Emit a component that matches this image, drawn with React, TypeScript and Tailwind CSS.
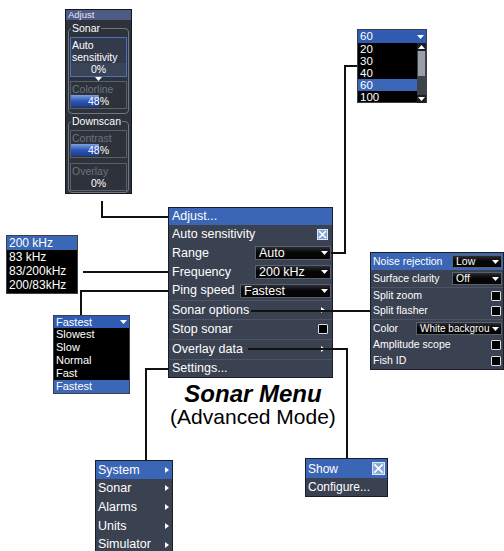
import React from "react";

const Tri = ({ className = "" }: { className?: string }) => (
  <svg width="7" height="4" viewBox="0 0 7 4" className={className}>
    <path d="M0 0h7L3.5 4z" fill="white" />
  </svg>
);

const TriUp = () => (
  <svg width="7" height="4" viewBox="0 0 7 4">
    <path d="M0 4h7L3.5 0z" fill="white" />
  </svg>
);

const RightArrow = () => (
  <svg width="4" height="6" viewBox="0 0 4 6">
    <path d="M0 0L4 3L0 6z" fill="white" />
  </svg>
);

const XBox = ({ size = 11 }: { size?: number }) => (
  <svg width={size} height={size} viewBox="0 0 11 11">
    <rect x="0.5" y="0.5" width="10" height="10" fill="#7fa3dc" stroke="#dfe8f7" />
    <path d="M2 2L9 9M9 2L2 9" stroke="white" strokeWidth="1.6" />
  </svg>
);

const EmptyBox = () => (
  <div className="w-[10px] h-[10px] bg-black border border-[#d8dce4] rounded-[1px]" />
);

const Drop = ({ label, className }: { label: string; className: string }) => (
  <div
    className={`flex items-center justify-between bg-gradient-to-b from-[#2a2d33] via-[#050505] to-[#050505] border border-[#5b616c] pl-[3px] pr-[2px] ${className}`}
  >
    <span className="whitespace-nowrap">{label}</span>
    <Tri />
  </div>
);

export default function App() {
  return (
    <div className="relative w-[504px] h-[551px] bg-white overflow-hidden font-['Liberation_Sans',Arial,sans-serif] text-white">
      {/* Adjust panel */}
      <div className="absolute left-[65px] top-[9px] w-[67px] h-[185px] bg-[#2d323b] border border-[#15171b] text-[10.5px] leading-none">
        <div className="h-[10px] bg-[#4d5a84] px-[2px] text-[9.5px] leading-[10px] text-[#e6e9f2]">Adjust</div>
        <div className="relative mx-[2px] mt-[8px] h-[86px] border border-[#707683] rounded-[4px] pt-[8px] px-[1px]">
          <div className="absolute left-[2px] -top-[7px] bg-[#2d323b] px-[1px] text-[10.5px] leading-[12px]">Sonar</div>
          <div className="h-[40px] border border-[#4a72c0] bg-[#323a4c] flex flex-col">
            <div className="px-[1px] pt-[1px] leading-[12px]">Auto</div>
            <div className="px-[1px] leading-[12px] whitespace-nowrap">sensitivity</div>
            <div className="mt-auto h-[13px] bg-[#3a4458] text-center leading-[13px]">0%</div>
          </div>
          <div className="flex justify-center h-[4px]"><Tri /></div>
          <div className="h-[28px] border border-[#5a606b] flex flex-col">
            <div className="px-[1px] pt-[1px] text-[#6c7380] leading-[12px]">Colorline</div>
            <div className="relative mt-auto mb-[1px] h-[12px]">
              <div className="absolute left-0 top-0 h-[12px] w-[28px] bg-gradient-to-b from-[#7ea0e0] via-[#2f55b6] to-[#1e3c8e]" />
              <div className="relative text-center leading-[12px]">48%</div>
            </div>
          </div>
        </div>
        <div className="relative mx-[2px] mt-[7px] h-[72px] border border-[#707683] rounded-[4px] pt-[8px] px-[1px]">
          <div className="absolute left-[2px] -top-[7px] bg-[#2d323b] px-[1px] text-[10.5px] leading-[12px]">Downscan</div>
          <div className="h-[28px] border border-[#5a606b] flex flex-col">
            <div className="px-[1px] pt-[1px] text-[#6c7380] leading-[12px]">Contrast</div>
            <div className="relative mt-auto mb-[1px] h-[12px]">
              <div className="absolute left-0 top-0 h-[12px] w-[28px] bg-gradient-to-b from-[#7ea0e0] via-[#2f55b6] to-[#1e3c8e]" />
              <div className="relative text-center leading-[12px]">48%</div>
            </div>
          </div>
          <div className="mt-[5px] h-[28px] border border-[#5a606b] flex flex-col">
            <div className="px-[1px] pt-[1px] text-[#6c7380] leading-[12px]">Overlay</div>
            <div className="mt-auto mb-[2px] text-center leading-[12px]">0%</div>
          </div>
        </div>
      </div>

      {/* Range list */}
      <div className="absolute left-[357px] top-[29px] w-[70px] h-[74px] bg-black border border-[#3c3f46] text-[11.5px] leading-none flex flex-col">
        <div className="h-[13px] bg-[#2f5cb0] flex items-center justify-between pl-[2px] pr-[2px] leading-[13px]">
          <span>60</span>
          <Tri />
        </div>
        <div className="flex flex-1">
          <div className="flex-1 flex flex-col">
            <div className="h-[12px] pl-[2px] leading-[12px]">20</div>
            <div className="h-[12px] pl-[2px] leading-[12px]">30</div>
            <div className="h-[12px] pl-[2px] leading-[12px]">40</div>
            <div className="h-[12px] pl-[2px] leading-[12px] bg-[#3a67b6]">60</div>
            <div className="h-[12px] pl-[2px] leading-[12px]">100</div>
          </div>
          <div className="w-[9px] flex flex-col bg-[#3d424b]">
            <div className="h-[8px] bg-[#1b1d22] flex items-center justify-center"><TriUp /></div>
            <div className="h-[25px] bg-[#9a9ea6] mx-[1px]" />
            <div className="flex-1" />
            <div className="h-[8px] bg-[#1b1d22] flex items-center justify-center"><Tri /></div>
          </div>
        </div>
      </div>

      {/* Frequency list */}
      <div className="absolute left-[6px] top-[235px] w-[72px] h-[59px] bg-black border border-[#3c3f46] text-[12px] flex flex-col">
        <div className="h-[14px] leading-[14px] pl-[2px] bg-[#3a67b6]">200 kHz</div>
        <div className="h-[14px] leading-[14px] pl-[2px]">83 kHz</div>
        <div className="h-[14px] leading-[14px] pl-[2px]">83/200kHz</div>
        <div className="h-[14px] leading-[14px] pl-[2px]">200/83kHz</div>
      </div>

      {/* Ping speed list */}
      <div className="absolute left-[53px] top-[315px] w-[77px] h-[79px] bg-black border border-[#3c3f46] text-[11px] flex flex-col">
        <div className="h-[12px] leading-[12px] pl-[2px] pr-[2px] bg-[#2f5cb0] flex items-center justify-between">
          <span>Fastest</span>
          <Tri />
        </div>
        <div className="h-[13px] leading-[13px] pl-[2px]">Slowest</div>
        <div className="h-[13px] leading-[13px] pl-[2px]">Slow</div>
        <div className="h-[13px] leading-[13px] pl-[2px]">Normal</div>
        <div className="h-[13px] leading-[13px] pl-[2px]">Fast</div>
        <div className="h-[13px] leading-[13px] pl-[2px] bg-[#3a67b6]">Fastest</div>
      </div>

      {/* Main menu */}
      <div className="absolute left-[168px] top-[207px] w-[165px] h-[171px] bg-[#3a4150] border border-[#1a1d23] text-[12.5px] flex flex-col">
        <div className="h-[17px] leading-[17px] px-[3px] bg-[#3a66b5]">Adjust...</div>
        <div className="h-[19px] flex items-center justify-between px-[3px]">
          <span>Auto sensitivity</span>
          <span className="mr-[1px]"><XBox /></span>
        </div>
        <div className="h-[19px] flex items-center justify-between pl-[3px] pr-[1px]">
          <span>Range</span>
          <Drop label="Auto" className="w-[76px] h-[14px] leading-[14px]" />
        </div>
        <div className="h-[19px] flex items-center justify-between pl-[3px] pr-[1px]">
          <span>Frequency</span>
          <Drop label="200 kHz" className="w-[76px] h-[14px] leading-[14px]" />
        </div>
        <div className="h-[19px] flex items-center justify-between pl-[3px] pr-[1px]">
          <span className="whitespace-nowrap">Ping speed</span>
          <Drop label="Fastest" className="w-[91px] h-[14px] leading-[14px]" />
        </div>
        <div className="h-[19px] flex items-center justify-between px-[3px] border-t border-[#4d5464]">
          <span>Sonar options</span>
          <span className="mr-[4px]"><RightArrow /></span>
        </div>
        <div className="h-[20px] flex items-center justify-between px-[3px] border-t border-[#4d5464]">
          <span>Stop sonar</span>
          <span className="mr-[1px]"><EmptyBox /></span>
        </div>
        <div className="h-[20px] flex items-center justify-between px-[3px] border-t border-[#4d5464]">
          <span>Overlay data</span>
          <span className="mr-[4px]"><RightArrow /></span>
        </div>
        <div className="h-[19px] flex items-center px-[3px] border-t border-[#4d5464]">
          <span>Settings...</span>
        </div>
      </div>

      {/* Caption */}
      <div className="absolute left-[140px] top-[381px] w-[226px] flex flex-col items-center text-black">
        <div className="text-[24px] leading-[26px] font-bold italic">Sonar Menu</div>
        <div className="text-[21px] leading-[22px] -mt-[1px]">(Advanced Mode)</div>
      </div>

      {/* Sonar options panel */}
      <div className="absolute left-[370px] top-[252px] w-[134px] h-[118px] bg-[#3a4150] border border-[#1a1d23] text-[10.5px] flex flex-col">
        <div className="h-[17px] flex items-center justify-between pl-[2px] pr-[1px] bg-[#3a66b5]">
          <span>Noise rejection</span>
          <Drop label="Low" className="w-[50px] h-[13px] leading-[13px]" />
        </div>
        <div className="h-[17px] flex items-center justify-between pl-[2px] pr-[1px]">
          <span>Surface clarity</span>
          <Drop label="Off" className="w-[50px] h-[13px] leading-[13px]" />
        </div>
        <div className="h-[16px] flex items-center justify-between pl-[2px] pr-[2px] border-t border-[#4d5464]">
          <span>Split zoom</span>
          <EmptyBox />
        </div>
        <div className="h-[16px] flex items-center justify-between pl-[2px] pr-[2px]">
          <span>Split flasher</span>
          <EmptyBox />
        </div>
        <div className="h-[18px] flex items-center justify-between pl-[2px] pr-[1px] border-t border-[#4d5464]">
          <span>Color</span>
          <Drop label="White backgrou" className="w-[86px] h-[13px] leading-[13px] text-[10px] pl-[2px] pr-[1px]" />
        </div>
        <div className="h-[16px] flex items-center justify-between pl-[2px] pr-[2px]">
          <span>Amplitude scope</span>
          <EmptyBox />
        </div>
        <div className="h-[16px] flex items-center justify-between pl-[2px] pr-[2px]">
          <span>Fish ID</span>
          <EmptyBox />
        </div>
      </div>

      {/* Show panel */}
      <div className="absolute left-[305px] top-[458px] w-[83px] h-[39px] bg-[#3a4150] border border-[#1a1d23] text-[12px] flex flex-col">
        <div className="h-[19px] flex items-center justify-between pl-[2px] pr-[2px] bg-[#3a66b5]">
          <span>Show</span>
          <XBox size={13} />
        </div>
        <div className="h-[18px] flex items-center pl-[2px]">Configure...</div>
      </div>

      {/* Settings panel */}
      <div className="absolute left-[95px] top-[460px] w-[78px] h-[95px] bg-[#3a4150] border border-[#1a1d23] text-[12.5px] flex flex-col">
        <div className="h-[18px] flex items-center justify-between pl-[2px] pr-[3px] bg-[#3a66b5]">
          <span>System</span>
          <RightArrow />
        </div>
        <div className="h-[19px] flex items-center justify-between pl-[2px] pr-[3px]">
          <span>Sonar</span>
          <RightArrow />
        </div>
        <div className="h-[20px] flex items-center justify-between pl-[2px] pr-[3px]">
          <span>Alarms</span>
          <RightArrow />
        </div>
        <div className="h-[19px] flex items-center justify-between pl-[2px] pr-[3px]">
          <span>Units</span>
          <RightArrow />
        </div>
        <div className="h-[19px] flex items-center justify-between pl-[2px] pr-[3px]">
          <span>Simulator</span>
          <RightArrow />
        </div>
      </div>

      {/* Connector lines */}
      <div className="absolute left-[101px] top-[201px] w-[2px] h-[17px] bg-[#111]" />
      <div className="absolute left-[101px] top-[216px] w-[67px] h-[2px] bg-[#111]" />

      <div className="absolute left-[331px] top-[252px] w-[15px] h-[2px] bg-[#111]" />
      <div className="absolute left-[344px] top-[65px] w-[2px] h-[189px] bg-[#111]" />
      <div className="absolute left-[344px] top-[65px] w-[13px] h-[2px] bg-[#111]" />

      <div className="absolute left-[83px] top-[271px] w-[85px] h-[2px] bg-[#111]" />

      <div className="absolute left-[80px] top-[290px] w-[88px] h-[2px] bg-[#111]" />
      <div className="absolute left-[80px] top-[290px] w-[2px] h-[25px] bg-[#111]" />

      <div className="absolute left-[251px] top-[310px] w-[119px] h-[2px] bg-[#111]" />

      <div className="absolute left-[248px] top-[348px] w-[100px] h-[2px] bg-[#111]" />
      <div className="absolute left-[346px] top-[348px] w-[2px] h-[110px] bg-[#111]" />

      <div className="absolute left-[145px] top-[368px] w-[24px] h-[2px] bg-[#111]" />
      <div className="absolute left-[145px] top-[368px] w-[2px] h-[92px] bg-[#111]" />
    </div>
  );
}
